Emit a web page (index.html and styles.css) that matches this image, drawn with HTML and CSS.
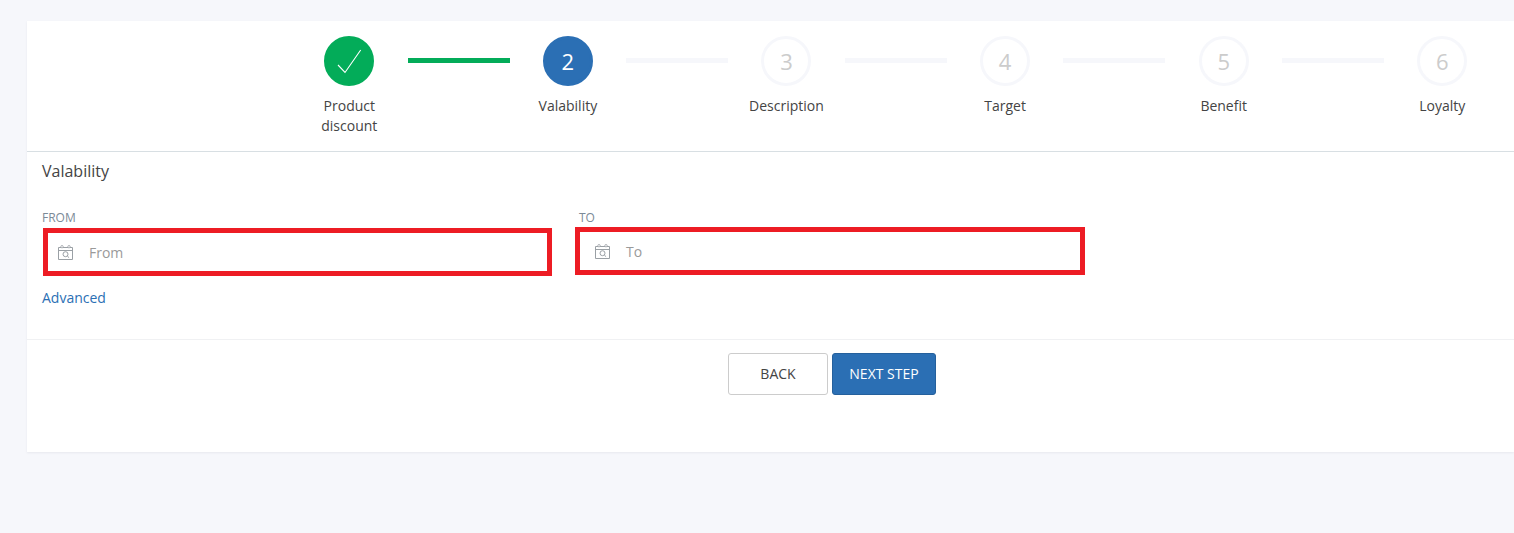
FILE: index.html
```html
<!DOCTYPE html>
<html lang="en">
<head>
<meta charset="utf-8">
<title>Valability</title>
<link rel="stylesheet" href="styles.css">
</head>
<body>
<svg class="sprite" width="0" height="0" aria-hidden="true">
  <symbol id="cal" viewBox="0 0 15 15">
    <path d="M.5 2.500h14v12H.5zM.5 5.500h14" fill="none" stroke="currentColor"/>
    <circle cx="4" cy="1.700" r="1.200" fill="#fff" stroke="currentColor" stroke-width=".8"/>
    <circle cx="11" cy="1.700" r="1.200" fill="#fff" stroke="currentColor" stroke-width=".8"/>
    <circle cx="7.500" cy="9.200" r="2.500" fill="none" stroke="currentColor"/>
    <path d="M9.300 11l1.800 1.700" fill="none" stroke="currentColor"/>
  </symbol>
</svg>
<main class="card">
  <nav class="stepper">
    <div class="step">
      <div class="dot dot-done">
        <svg class="check" width="26" height="26" viewBox="0 0 26 26"><path d="M2 17l7 7.500L24.700 2" fill="none" stroke="#fff" stroke-width="1.100"/></svg>
      </div>
      <div class="step-name">Product discount</div>
    </div>
    <div class="line line-done"></div>
    <div class="step">
      <div class="dot dot-active">2</div>
      <div class="step-name">Valability</div>
    </div>
    <div class="line"></div>
    <div class="step">
      <div class="dot">3</div>
      <div class="step-name">Description</div>
    </div>
    <div class="line"></div>
    <div class="step">
      <div class="dot">4</div>
      <div class="step-name">Target</div>
    </div>
    <div class="line"></div>
    <div class="step">
      <div class="dot">5</div>
      <div class="step-name">Benefit</div>
    </div>
    <div class="line"></div>
    <div class="step">
      <div class="dot">6</div>
      <div class="step-name">Loyalty</div>
    </div>
  </nav>
  <section class="form">
    <h2 class="form-title">Valability</h2>
    <div class="fields">
      <div class="field field-from">
        <div class="field-label">FROM</div>
        <div class="input">
          <svg class="input-icon" width="15" height="15"><use href="#cal"/></svg>
          <span class="placeholder">From</span>
        </div>
      </div>
      <div class="field field-to">
        <div class="field-label">TO</div>
        <div class="input">
          <svg class="input-icon" width="15" height="15"><use href="#cal"/></svg>
          <span class="placeholder">To</span>
        </div>
      </div>
    </div>
    <a class="advanced" href="#">Advanced</a>
  </section>
  <footer class="actions">
    <button class="btn btn-back" type="button">BACK</button>
    <button class="btn btn-next" type="button">NEXT STEP</button>
  </footer>
</main>
</body>
</html>
```
FILE: styles.css
```css
* { box-sizing: border-box; }
html, body { margin: 0; height: 100%; }
body {
  background: #f6f7fb;
  font-family: "Open Sans", "Liberation Sans", sans-serif;
  font-size: 14px;
  color: #444;
  overflow: hidden;
}
.sprite { display: block; }
.card {
  margin: 21px 0 0 27px;
  height: 431px;
  background: #fff;
  box-shadow: 0 1px 2px rgba(60, 70, 90, .08);
}
.stepper {
  display: flex;
  align-items: flex-start;
  gap: 14px;
  height: 131px;
  padding: 15px 0 0 278px;
  border-bottom: 1px solid #d8dfe3;
}
.step {
  flex: 0 0 88.6px;
  display: flex;
  flex-direction: column;
  align-items: center;
}
.dot {
  width: 50px;
  height: 50px;
  border-radius: 50%;
  border: 3px solid #f6f7fb;
  display: flex;
  align-items: center;
  justify-content: center;
  font-size: 22px;
  color: #ccc;
}
.dot-done { background: #03ac59; border-color: #03ac59; }
.dot-active { background: #2b6fb4; border-color: #2b6fb4; color: #fff; }
.check { display: block; }
.step-name {
  margin-top: 10px;
  text-align: center;
  line-height: 20px;
  color: #444;
  width: 70px;
  white-space: normal;
}
.step:not(:first-child) .step-name { width: auto; white-space: nowrap; }
.line {
  flex: 0 0 102px;
  height: 5px;
  margin-top: 22px;
  background: #f6f7fb;
}
.line-done { background: #03ac59; }
.form { padding: 0 0 0 15px; height: 188px; border-bottom: 1px solid #f0f1f3; }
.form-title {
  margin: 0;
  padding-top: 8px;
  font-size: 16px;
  font-weight: 400;
  line-height: 22px;
  color: #444;
}
.fields { display: flex; margin-top: 28px; }
.field-from { flex: 0 0 509px; margin-left: 1px; }
.field-to { flex: 0 0 510px; margin-left: 23px; }
.field-label {
  font-size: 12px;
  line-height: 16px;
  height: 18px;
  color: #7c8a97;
  margin-left: -1px;
}
.field-to .field-label { margin-left: 4px; height: 17px; }
.input {
  display: flex;
  align-items: center;
  height: 48px;
  border: 5px solid #ed1c24;
  padding-left: 10px;
  color: #9a9a9a;
}
.field-to .input { padding-left: 15px; }
.input-icon { flex: none; color: #9aa0a5; }
.placeholder { margin-left: 16px; color: #9a9a9a; }
.advanced {
  display: block;
  margin-top: 12px;
  line-height: 20px;
  color: #2b6fb4;
  text-decoration: none;
}
.actions {
  display: flex;
  gap: 4px;
  padding: 13px 0 0 701px;
}
.btn {
  height: 42px;
  border-radius: 3px;
  font: 14px "Open Sans", "Liberation Sans", sans-serif;
  padding: 0 0 2px;
}
.btn-back { width: 100px; background: #fff; border: 1px solid #ccc; color: #444; }
.btn-next { width: 104px; background: #2b6fb4; border: 1px solid #25609c; color: #fff; }
```
